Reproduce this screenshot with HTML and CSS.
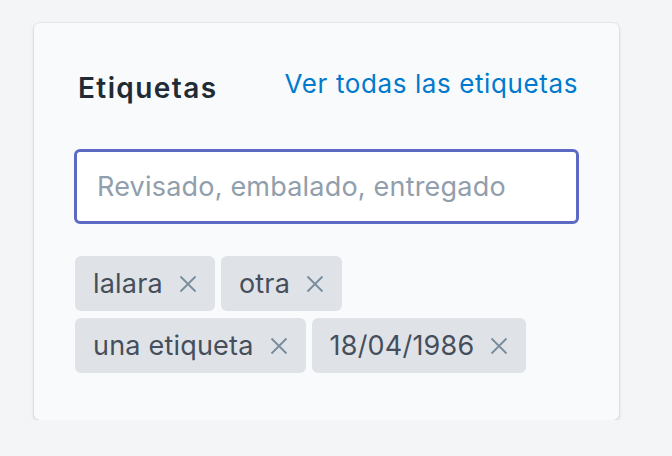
FILE: index.html
```html
<!DOCTYPE html>
<html lang="es">
<head>
<meta charset="utf-8">
<link rel="stylesheet" href="styles.css">
</head>
<body>
<section class="card">
  <header class="card-header">
    <h2 class="title">Etiquetas</h2>
    <a class="link" href="#">Ver todas las etiquetas</a>
  </header>
  <div class="field">
    <input class="input" type="text" placeholder="Revisado, embalado, entregado">
  </div>
  <ul class="tags">
    <li class="tag"><span>lalara</span><button class="remove" aria-label="Quitar"><svg viewBox="0 0 18 18"><path d="M1.5 1.5l15 15M16.5 1.5l-15 15"/></svg></button></li>
    <li class="tag"><span>otra</span><button class="remove" aria-label="Quitar"><svg viewBox="0 0 18 18"><path d="M1.5 1.5l15 15M16.5 1.5l-15 15"/></svg></button></li>
    <li class="tag"><span>una etiqueta</span><button class="remove" aria-label="Quitar"><svg viewBox="0 0 18 18"><path d="M1.5 1.5l15 15M16.5 1.5l-15 15"/></svg></button></li>
    <li class="tag"><span>18/04/1986</span><button class="remove" aria-label="Quitar"><svg viewBox="0 0 18 18"><path d="M1.5 1.5l15 15M16.5 1.5l-15 15"/></svg></button></li>
  </ul>
</section>
</body>
</html>
```
FILE: styles.css
```css
* { box-sizing: border-box; }
html, body { margin: 0; }
body {
  background: #f4f5f7;
  font-family: Inter, Roboto, sans-serif;
  padding: 23px 0 0 34px;
}
.card {
  width: 585px;
  height: 397px;
  background: #f9fafb;
  border-radius: 6px;
  box-shadow: 0 0 0 1px rgba(63,63,68,0.06), 0 2px 4px rgba(63,63,68,0.15);
  padding: 48px 40px 0 40px;
}
.card-header {
  display: flex;
  justify-content: space-between;
  align-items: flex-start;
  padding-right: 1px;
}
.title {
  margin: 0;
  font-size: 28px;
  font-weight: 600;
  letter-spacing: 1.4px;
  color: #212b36;
  padding-left: 4px;
  line-height: 34px;
}
.link {
  color: #007ace;
  text-decoration: none;
  font-size: 26px;
  letter-spacing: 0.6px;
  line-height: 34px;
  margin-top: -4px;
}
.field { margin-top: 44px; }
.input {
  display: block;
  width: 505px;
  height: 75px;
  border: 3px solid #5c6ac4;
  border-radius: 6px;
  background: #fff;
  padding: 0 20px;
  font-family: inherit;
  font-size: 27px;
  letter-spacing: 0.2px;
  color: #212b36;
  outline: none;
}
.input::placeholder { color: #919eab; }
.tags {
  list-style: none;
  margin: 32px 0 0 1px;
  padding: 0;
  display: flex;
  flex-wrap: wrap;
  gap: 7px 6px;
  width: 480px;
}
.tag {
  display: flex;
  align-items: center;
  height: 55px;
  background: #dfe3e8;
  border-radius: 6px;
  padding: 0 18px;
  font-size: 27px;
  letter-spacing: 0.2px;
  color: #454f5b;
}
.remove {
  border: 0;
  background: none;
  padding: 0;
  margin-left: 16px;
  width: 18px;
  height: 18px;
  display: flex;
}
.remove svg {
  width: 18px;
  height: 18px;
  stroke: #798c9c;
  stroke-width: 1.8;
  fill: none;
}
```
